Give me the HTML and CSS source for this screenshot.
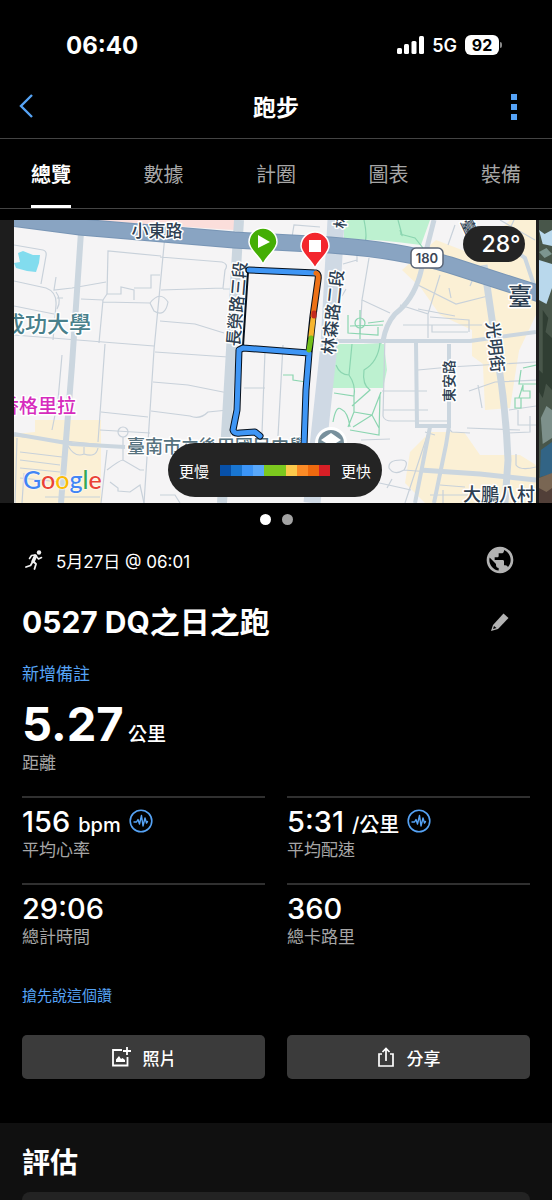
FILE: index.html
```html
<!DOCTYPE html>
<html lang="zh-Hant">
<head>
  <meta charset="UTF-8"/>
  <meta name="viewport" content="width=device-width, initial-scale=1.0"/>
  <title>跑步</title>
  <link rel="stylesheet" href="styles.css">
</head>
<body>
  <div class="statusbar">
    <span class="clock">06:40</span>
    <div class="status-right">
      <svg width="27" height="18" viewBox="0 0 27 18" fill="#fff">
        <rect x="0" y="12" width="5" height="6" rx="1.5"/><rect x="7" y="8" width="5" height="10" rx="1.5"/>
        <rect x="14.500" y="5" width="5" height="13" rx="1.5"/><rect x="22" y="0" width="5" height="18" rx="1.5"/>
      </svg>
      <span class="network">5G</span>
      <span class="battery">92</span>
    </div>
  </div>

  <header class="navbar">
    <button class="icon-btn" aria-label="返回">
      <svg width="14" height="26" viewBox="0 0 14 26" fill="none" stroke="#56a3f5" stroke-width="2.4"><path d="M13 1 2 12l11 11"/></svg>
    </button>
    <h1>跑步</h1>
    <button class="icon-btn" aria-label="更多">
      <svg width="14" height="26" viewBox="0 0 14 26" fill="#56a3f5"><path d="M4 0h6v6H4zM4 10h6v6H4zM4 20h6v6H4z"/></svg>
    </button>
  </header>

  <nav class="tabs">
    <a href="#overview" class="active">總覽</a>
    <a href="#stats">數據</a>
    <a href="#laps">計圈</a>
    <a href="#charts">圖表</a>
    <a href="#gear">裝備</a>
  </nav>

  <main id="overview">
    <div class="carousel">
      <div class="map">
        <svg class="map-svg" viewBox="14 0 522 283" preserveAspectRatio="xMidYMid slice">
          <rect x="14" width="522" height="283" fill="#f5f4f5"/>

          <!-- blocks -->
          <path d="M98 0H234V10L98 1z" fill="#fbdedb"/>
          <path d="M344 0H430L421 25Q380 19 344 19z" fill="#bdf1d0"/>
          <path d="M335 124H384L387 150 383 168H332z" fill="#bdf1d0"/>
          <path d="M436 20 475 35 510 0H536V95L505 160 472 136V110L440 95 421 68 402 50z" fill="#fbf0d5"/>
          <path d="M35 200H101V214L70 212V283H14V214L35 212z" fill="#fbf0d5"/>
          <path d="M70 200H101V283H70z" fill="#fbf0d5"/>
          <path d="M482 124H520L510 188 485 190z" fill="#fbf0d5"/>
          <path d="M430 212H464L480 235 520 235 536 245V283H425L405 263 410 232z" fill="#fbf0d5"/>
          <path d="M18 33 23 31 33 35 40 35 39 43 36 52 27 51 16 48 14 43 20 42z" fill="#82dcee"/>

          <!-- side streets -->
          <g fill="none" stroke="#c8d1da" stroke-width="1.2">
            <path d="M14 25 43 30Q47 31 46 36L41 64"/>
            <path d="M14 61 46 68Q57 72 56 85L53 120M56 57 54 70 72 68 106 62"/>
            <path d="M56 72Q62 80 57 89M57 78H63"/>
            <path d="M14 115 154 126M14 86 54 94M107 74 108 31 161 36M107 74 121 74V67L134 70V80M134 68H151V55H160"/>
            <path d="M81 79 103 80 107 74M103 80 99 123M103 82 150 83Q160 70 168 82 165 98 154 91L150 83"/>
            <path d="M165 15 154 130 144 283M160 37 222 42Q229 44 225 50L223 68 161 70M223 69 238 69"/>
            <path d="M160 101 195 104 224 113M155 132 228 137M105 124 98 222M153 162 188 165 228 173"/>
            <path d="M151 191 190 196Q200 200 208 192L228 190M101 192 148 197M100 210 150 213"/>
            <path d="M14 216 125 227M17 218 15 283M20 232 62 237M20 240 60 245M20 248 60 252M20 258 61 262"/>
            <path d="M68 226Q75 238 84 234V227M84 234Q96 238 98 228M45 277H100M107 230 101 283M62 135 58 180 52 210"/>
            <circle cx="123" cy="212" r="5"/>
            <path d="M123 217V240M107 250Q120 240 123 240L140 250H144M110 262 118 268V271L130 272 140 265 144 283M160 275H175L180 283"/>
            <path d="M24 253 22 283M265 131 262 213M244 168H265M283 125 278 216"/>
            <path d="M292 17 294 5 320 7M343 44 357 40M357 42V35M346 69 342 76M369 38 362 80 390 93"/>
            <path d="M362 80 360 114M400 85 428 94V118M403 105H482M418 65 456 84 488 76M440 55 428 94M432 105V112H468M469 112V100L430 97"/>
            <path d="M455 5 448 25M475 54 470 66M449 68 451 78M514 0 507 15M418 89 455 96"/>
            <path d="M385 114 383 196Q384 201 392 201H448M382 171H427M383 190H428M418 150 450 147 536 142"/>
            <path d="M469 171 495 162 540 160M478 165 482 188M467 208 520 210M430 207 405 283M361 220 390 219"/>
            <path d="M404 250Q410 240 401 240 388 240 389 248 394 256 404 250L430 252M392 259 387 268M375 262 411 270M435 215 425 212"/>
            <path d="M509 190 536 186M518 190V205H536M508 213 530 212V196M516 234V245Q520 251 536 247M430 275H470M443 270V283"/>
            <path d="M535 20 500 0M450 210 452 212 470 213M440 265 465 267"/>
          </g>

          <!-- park paths -->
          <g fill="none" stroke="#8bd5b0" stroke-width="1.2">
            <path d="M364 0Q368 18 364 25M400 10Q405 25 398 0M400 14 415 18 423 28"/>
            <path d="M350 106 383 105M344 122 382 123M348 95V113L378 115V107M360 90V123M368 103 384 101"/>
            <circle cx="360" cy="103" r="5"/>
            <path d="M334 173 354 176Q356 165 349 155 340 155 336 145M349 155 352 124M380 123Q378 142 364 150 362 165 370 170L352 186M354 176V192L348 207M333 202Q336 185 341 189 348 192 350 207M354 192 372 195 381 172M353 207 372 195 379 208M350 210 379 215 380 174M283 155 293 155V160L306 162"/>
            <path d="M523 148 537 145V164H519L521 150M523 165V171H530V178H519zM515 178H521V188H515z"/>
          </g>

          <!-- wider roads -->
          <g fill="none" stroke="#cbd6df">
            <path d="M434 0 420 55Q413 80 395 94 386 104 383 121" stroke-width="5"/>
            <path d="M338 121H470L536 112" stroke-width="4"/>
            <path d="M416 123 417 206H449V124" stroke-width="4"/>
            <path d="M449 206 446 225 434 283M430 207 415 283" stroke-width="4"/>
            <path d="M484 45 498 140Q506 190 508 240L505 283" stroke-width="7"/>
            <path d="M420 250 480 254 536 260" stroke-width="5"/>
            <path d="M500 20 525 38 534 65" stroke-width="4"/>
            <path d="M14 214 72 224 125 227" stroke-width="4"/>
            <path d="M81 12 72 145 61 283" stroke-width="6"/>
            <path d="M239 0 231 130 222 283" stroke-width="10"/>
            <path d="M336 0 329 125 312 283" stroke-width="17" stroke="#cfd9e4"/>
          </g>

          <!-- main road -->
          <path d="M10 -2 80 7 234 20 330 25Q400 30 450 45L540 74" fill="none" stroke="#7895b5" stroke-width="17"/>
          <path d="M10 -2 80 7 234 20 330 25Q400 30 450 45L540 74" fill="none" stroke="#89a4c2" stroke-width="15"/>

          <g class="map-labels" text-anchor="middle">
            <text x="157" y="17" font-size="17">小東路</text>
            <text transform="translate(237 84) rotate(-85)" y="6" font-size="17">長榮路三段</text>
            <text transform="translate(333 92) rotate(-84)" y="6" font-size="17">林森路二段</text>
            <text transform="translate(340 1) rotate(-85)" y="6" font-size="15">林</text>
            <text transform="translate(449 161) rotate(-90)" y="5" font-size="14">東安路</text>
            <text transform="translate(495 127) rotate(84)" y="6" font-size="17">光明街</text>
            <text transform="translate(469 6) rotate(65)" y="6" font-size="15">臺</text>
            <text x="520" y="85" font-size="24">臺</text>
            <text x="499" y="281" font-size="18">大鵬八村</text>
            <text x="47" y="112" font-size="22" fill="#49808b">成功大學</text>
            <text x="38" y="193" font-size="19" fill="#d62bbd">香格里拉</text>
            <text x="217" y="233" font-size="18" fill="#56727e">臺南市立後甲國民中學</text>
          </g>

          <circle cx="331" cy="223" r="16" fill="#fff"/>
          <circle cx="331" cy="223" r="13" fill="#78909c"/>
          <path d="M321 220 331 213 341 220 331 226z" fill="#fff"/>

          <rect x="411" y="28" width="32" height="20" rx="5" fill="#fff" stroke="#596476" stroke-width="1.5"/>
          <text class="shield" x="427" y="43" text-anchor="middle">180</text>

          <!-- route -->
          <g fill="none" stroke-linejoin="round" stroke-linecap="round">
            <path d="M248 52 243 126" stroke="#06101c" stroke-width="2"/>
            <path class="route-edge" d="M249 50 316 53Q319 54 318 60L313 96 309 133 243 128M309 133 306 170 304 226M243 128 239 130 237 190 233 210Q234 214 240 213L255 212 260 216"/>
            <path d="M249 50 316 53M309 133 243 128 239 130M309 133 306 170 304 226M239 130 237 190 233 210Q234 214 240 213L255 212 260 216" stroke="#3f96f5" stroke-width="5"/>
            <path d="M316 53Q319 54 318 60L313 96" stroke="#ed7117" stroke-width="5"/>
            <path d="M313 99 311 116" stroke="#f6b52e" stroke-width="5"/>
            <path d="M311 118 309 130" stroke="#74bf1a" stroke-width="5"/>
            <path d="M314 93V96" stroke="#c32b1f" stroke-width="5"/>
          </g>
          <g stroke="#fff" stroke-width="1.5">
            <path d="M263 44C258 34 249 30 249 22A14 14 0 0 1 277 22C277 30 268 34 263 44z" fill="#44ae05"/>
            <path d="M315 48C310 38 301 34 301 26A14 14 0 0 1 329 26C329 34 320 38 315 48z" fill="#f3262d"/>
          </g>
          <path d="M258 15 270 22 258 28z" fill="#fff"/>
          <path d="M309 20h12v12h-12z" fill="#fff"/>
        </svg>
        <span class="temp">28°</span>
        <div class="google"><span class="g-blue">G</span><span class="g-red">o</span><span class="g-yellow">o</span><span class="g-blue">g</span><span class="g-green">l</span><span class="g-red">e</span></div>
        <div class="legend">
          <span>更慢</span>
          <div class="scale"><i class="c1"></i><i class="c2"></i><i class="c3"></i><i class="c4"></i><i class="c5"></i><i class="c5"></i><i class="c6"></i><i class="c7"></i><i class="c8"></i><i class="c9"></i></div>
          <span>更快</span>
        </div>
      </div>
      <svg class="photo" viewBox="0 0 14 283" preserveAspectRatio="none">
        <rect width="14" height="283" fill="#48564a"/>
        <path d="M0 10 6 14 14 10V26L4 24zM0 40 14 44V68L8 84 0 80z" fill="#b9d8ec"/>
        <path d="M0 32 8 28 14 34 6 38z" fill="#7d958f"/>
        <path d="M4 90 10 98 7 112 14 118V170L4 160zM0 150 9 158 4 178 0 172z" fill="#303e33"/>
        <path d="M2 198 8 186 14 190V218L4 224z" fill="#7d908b"/>
        <path d="M2 230 14 222V254L1 257z" fill="#326485"/>
        <path d="M0 258 14 253V283H0z" fill="#796653"/>
        <path d="M0 268 8 272 14 268V283H0z" fill="#513f38"/>
      </svg>
    </div>
    <div class="dots"><span class="on"></span><span></span></div>

    <section class="summary">
      <div class="row date-row">
        <svg width="18" height="20" viewBox="0 0 18 20" fill="none" stroke="#f2f2f2" stroke-linecap="round" stroke-linejoin="round">
          <circle cx="14" cy="2.500" r="2.200" fill="#f2f2f2" stroke="none"/>
          <path d="M10.500 6 8 11.500" stroke-width="3.400"/>
          <path d="M10 5 6.500 5.500 4.500 8.500M11.500 6.500 13.500 9 16.500 7.500" stroke-width="1.600"/>
          <path d="M8.500 11.500 11 14 9.500 19M7.500 12 5.500 15.500 1 17" stroke-width="1.800"/>
        </svg>
        <time>5月27日 @ 06:01</time>
        <button class="icon-btn" aria-label="隱私">
          <svg width="32" height="32" viewBox="0 0 24 24" fill="#b3b3b3"><path d="M12 2C6.480 2 2 6.480 2 12s4.480 10 10 10 10-4.480 10-10S17.520 2 12 2zm-1 17.930c-3.950-.49-7-3.850-7-7.930 0-.62.080-1.210.21-1.790L9 15v1c0 1.100.9 2 2 2v1.930zm6.900-2.540c-.26-.81-1-1.390-1.900-1.390h-1v-3c0-.55-.45-1-1-1H8v-2h2c.55 0 1-.45 1-1V7h2c1.100 0 2-.9 2-2v-.41c2.930 1.190 5 4.060 5 7.410 0 2.080-.8 3.970-2.100 5.390z"/></svg>
        </button>
      </div>
      <div class="row title-row">
        <h2>0527 DQ之日之跑</h2>
        <button class="icon-btn" aria-label="編輯">
          <svg width="20" height="20" viewBox="0 0 20 20"><path d="M1 19 3 13 13.500 1.500 18.500 6 8 17z" fill="#b3b3b3"/><path d="M3 17 4 14 6.500 16z" fill="#000"/></svg>
        </button>
      </div>
      <a class="note" href="#note">新增備註</a>

      <div class="distance"><span class="num">5.27</span> <span class="unit">公里</span></div>
      <div class="label">距離</div>

      <div class="stats">
        <div class="stat">
          <div class="value">156 <small>bpm</small>
            <svg width="24" height="24" viewBox="0 0 24 24" fill="none" stroke="#56a3f5" stroke-linejoin="round" stroke-linecap="round"><circle cx="12" cy="12" r="10.800" stroke-width="1.600"/><path d="M5 13H7.500L9 10.500 10.500 15 12.500 6.500 14 17 16 9 17.500 14 18.500 12.500" stroke-width="1.400"/></svg>
          </div>
          <div class="label">平均心率</div>
        </div>
        <div class="stat">
          <div class="value">5:31 <small>/公里</small>
            <svg width="24" height="24" viewBox="0 0 24 24" fill="none" stroke="#56a3f5" stroke-linejoin="round" stroke-linecap="round"><circle cx="12" cy="12" r="10.800" stroke-width="1.600"/><path d="M5 13H7.500L9 10.500 10.500 15 12.500 6.500 14 17 16 9 17.500 14 18.500 12.500" stroke-width="1.400"/></svg>
          </div>
          <div class="label">平均配速</div>
        </div>
        <div class="stat">
          <div class="value">29:06</div>
          <div class="label">總計時間</div>
        </div>
        <div class="stat">
          <div class="value">360</div>
          <div class="label">總卡路里</div>
        </div>
      </div>

      <a class="like" href="#like">搶先說這個讚</a>

      <div class="actions">
        <button>
          <svg width="20" height="20" viewBox="0 0 20 20" fill="none" stroke="#fff" stroke-width="1.800"><path d="M11 3H2V18.500H16.500V10M12 4H20M16 0V8"/><path d="M5 15V12.500L8 9 10 12 11.500 11 14 13V15z" fill="#fff" stroke="none"/></svg>
          照片
        </button>
        <button>
          <svg width="18" height="20" viewBox="0 0 18 20" fill="none" stroke="#fff" stroke-width="1.700"><path d="M5 7H2V19H16V7H13M9 14V2M5.500 5 9 1.500 12.500 5"/></svg>
          分享
        </button>
      </div>
    </section>

    <section class="review">
      <h2>評估</h2>
      <div class="card"></div>
    </section>
  </main>
</body>
</html>
```
FILE: styles.css
```css
* { box-sizing:border-box; }
body { margin:0; background:#000; color:#fff; font-family:Inter, "Noto Sans CJK TC", sans-serif; }
h1, h2 { margin:0; }
a { color:#56a3f5; text-decoration:none; }
svg { display:block; flex-shrink:0; }
button { font:inherit; color:inherit; border:0; background:none; padding:0; }

.statusbar { height:76px; padding:14px 53px 0 66px; display:flex; align-items:center; justify-content:space-between; }
.clock { font-size:24px; font-weight:700; }
.status-right { display:flex; align-items:center; gap:8px; }
.network { font-size:18px; font-weight:600; }
.battery { position:relative; width:34px; height:20px; border-radius:6px; background:#fff; color:#000; font-size:16px; font-weight:700; line-height:20px; text-align:center; }
.battery::after { content:""; position:absolute; right:-3px; top:7px; width:2px; height:6px; border-radius:0 2px 2px 0; background:#888; }

.navbar { height:63px; padding:0 19px; display:grid; grid-template-columns:1fr auto 1fr; align-items:center; border-bottom:1px solid #444; }
.navbar h1 { font-size:23px; font-weight:700; line-height:32px; padding-top:2px; }
.icon-btn { display:flex; align-items:center; justify-content:center; cursor:pointer; }
.navbar .icon-btn { justify-self:start; }
.navbar .icon-btn:last-child { justify-self:end; margin-right:12px; }

.tabs { height:70px; padding:0 31px; display:flex; justify-content:space-between; border-bottom:1px solid #444; }
.tabs a { padding-top:6px; color:#a6a6a6; font-size:20px; line-height:60px; border-bottom:3px solid transparent; }
.tabs .active { color:#fff; font-weight:700; border-color:#fff; }

.carousel { margin-top:11px; padding-left:14px; display:flex; gap:3px; background:#1d1d1d; height:283px; }
.map { position:relative; flex:1; overflow:hidden; }
.map-svg { width:100%; height:100%; }
.map-labels { font-family:"Noto Sans CJK TC", sans-serif; font-weight:500; fill:#2e3f52; stroke:#fff; stroke-width:3px; stroke-linejoin:round; paint-order:stroke; }
.shield { font-size:13px; font-weight:600; fill:#3c4656; }
.route-edge { stroke:#06101c; stroke-width:7px; }
.photo { width:13px; height:100%; }
.temp { position:absolute; top:6px; right:11px; width:62px; height:36px; padding-left:14px; border-radius:18px; background:#242424; font-size:23px; font-weight:500; line-height:36px; text-align:center; }
.google { position:absolute; left:9px; bottom:9px; font-family:Lato, sans-serif; font-size:25px; font-weight:500; line-height:30px; text-shadow:0 0 2px #fff, 0 0 2px #fff; }
.g-blue { color:#4285f4; }
.g-red { color:#ea4335; }
.g-yellow { color:#fbbc05; }
.g-green { color:#34a853; }
.legend { position:absolute; left:50%; bottom:6px; transform:translateX(-50%); width:214px; height:54px; border-radius:27px; background:#242424; display:flex; align-items:center; justify-content:center; gap:11px; font-size:15px; white-space:nowrap; }
.scale { display:flex; width:110px; height:11px; }
.scale i { flex:1; }
.c1 { background:#0750a8; }
.c2 { background:#1976d2; }
.c3 { background:#3c95f7; }
.c4 { background:#59a8fa; }
.c5 { background:#7cc81f; }
.c6 { background:#fcc94b; }
.c7 { background:#fb8b26; }
.c8 { background:#ee690e; }
.c9 { background:#d71f26; }

.dots { display:flex; justify-content:center; gap:11px; padding:11px 0; }
.dots span { width:11px; height:11px; border-radius:50%; background:#a3a3a3; }
.dots .on { background:#fff; }

.summary { padding:7px 22px 0; }
.row { display:flex; align-items:center; }
.row .icon-btn { margin-left:auto; width:32px; height:32px; margin-right:14px; }
.date-row { height:34px; padding-left:3px; gap:13px; font-size:17px; }
.title-row { height:44px; margin-top:23px; }
.title-row h2 { font-size:30px; font-weight:700; line-height:44px; }
.note { display:block; margin-top:18px; font-size:17px; line-height:24px; }
.distance { margin-top:11px; height:54px; line-height:54px; }
.distance .num { font-size:47px; font-weight:700; }
.unit { font-size:19px; font-weight:500; }
.label { color:#a6a6a6; font-size:17px; line-height:24px; }
.stats { margin-top:21px; display:grid; grid-template-columns:1fr 1fr; column-gap:22px; }
.stat { height:87px; padding-top:6px; border-top:2px solid #303030; }
.value { display:flex; align-items:baseline; gap:8px; height:34px; font-size:29px; font-weight:500; line-height:36px; }
.value small { font-size:20px; font-weight:500; }
.value svg { align-self:center; }
.like { display:block; margin-top:15px; font-size:15px; line-height:22px; }
.actions { margin-top:28px; display:grid; grid-template-columns:1fr 1fr; gap:22px; }
.actions button { height:44px; border-radius:5px; background:#3b3b3b; display:flex; align-items:center; justify-content:center; gap:12px; font-size:17px; font-weight:500; }

.review { margin-top:44px; padding:20px 22px 0; background:#101010; }
.review h2 { font-size:28px; font-weight:700; line-height:40px; }
.card { margin-top:9px; min-height:8px; border-radius:10px 10px 0 0; background:#232323; }
```
